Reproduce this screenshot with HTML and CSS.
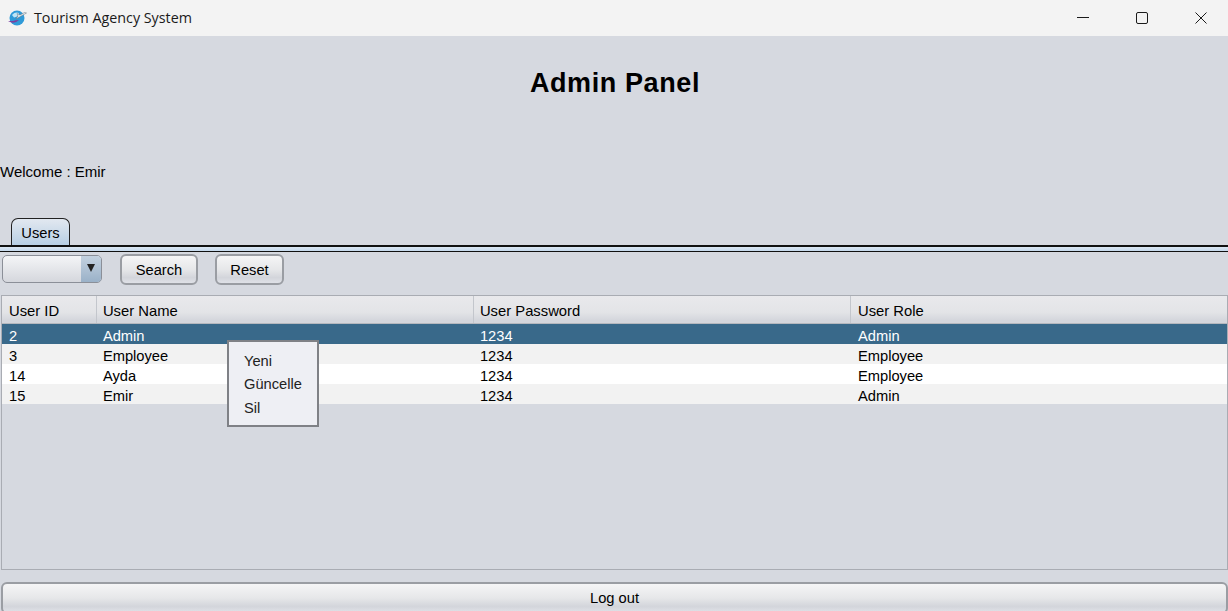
FILE: index.html
```html
<!DOCTYPE html>
<html lang="en">
<head>
    <meta charset="UTF-8">
    <meta name="viewport" content="width=device-width, initial-scale=1.0">
    <title>Tourism Agency System</title>
    <link rel="stylesheet" href="styles.css">
</head>
<body>
    <!-- Title Bar -->
    <div class="titlebar">
        <svg class="app-icon" width="20" height="18" viewBox="0 0 20 18">
            <circle cx="10" cy="9" r="7.5" fill="#2f9ad8"/>
            <path d="M5 6 Q8 2.5 12 4 Q11 8 7 8.5 Z" fill="#bfe6f7"/>
            <path d="M1 12 Q7 16 12 11 Q8 11 6 12 Z" fill="#7a3fa0"/>
            <path d="M9 10 L19.5 4 L17.5 3.5 L13 6 L10 4.5 L11 7 Z" fill="#e8eef2" stroke="#66707a" stroke-width="0.5"/>
        </svg>
        <span class="app-title">Tourism Agency System</span>
        <div class="window-controls">
            <svg class="win-btn" width="12" height="12" viewBox="0 0 12 12"><path d="M0 5.5 H12" stroke="#1a1a1a" fill="none"/></svg>
            <svg class="win-btn" width="12" height="12" viewBox="0 0 12 12"><rect x="0.5" y="0.5" width="11" height="11" rx="1.5" stroke="#1a1a1a" fill="none"/></svg>
            <svg class="win-btn" width="12" height="12" viewBox="0 0 12 12"><path d="M0.5 0.5 L11.5 11.5 M11.5 0.5 L0.5 11.5" stroke="#1a1a1a" fill="none"/></svg>
        </div>
    </div>

    <div class="window">
        <h1 class="panel-title">Admin Panel</h1>
        <div class="welcome">Welcome : Emir</div>

        <!-- Tabs -->
        <div class="tabs">
            <div class="tab">Users</div>
        </div>
        <div class="tab-rule"></div>

        <!-- Filter Row -->
        <div class="toolbar">
            <div class="combo"><span class="combo-arrow"></span></div>
            <button class="btn btn-search">Search</button>
            <button class="btn btn-reset">Reset</button>
        </div>

        <!-- Users Table -->
        <div class="table-box">
            <div class="row header">
                <div class="cell col-id">User ID</div>
                <div class="cell col-wide">User Name</div>
                <div class="cell col-wide">User Password</div>
                <div class="cell col-wide">User Role</div>
            </div>
            <div class="row selected">
                <div class="cell col-id">2</div>
                <div class="cell col-wide">Admin</div>
                <div class="cell col-wide">1234</div>
                <div class="cell col-wide">Admin</div>
            </div>
            <div class="row alt">
                <div class="cell col-id">3</div>
                <div class="cell col-wide">Employee</div>
                <div class="cell col-wide">1234</div>
                <div class="cell col-wide">Employee</div>
            </div>
            <div class="row">
                <div class="cell col-id">14</div>
                <div class="cell col-wide">Ayda</div>
                <div class="cell col-wide">1234</div>
                <div class="cell col-wide">Employee</div>
            </div>
            <div class="row alt">
                <div class="cell col-id">15</div>
                <div class="cell col-wide">Emir</div>
                <div class="cell col-wide">1234</div>
                <div class="cell col-wide">Admin</div>
            </div>

            <!-- Context Menu -->
            <ul class="context-menu">
                <li>Yeni</li>
                <li>Güncelle</li>
                <li>Sil</li>
            </ul>
        </div>

        <button class="btn logout">Log out</button>
    </div>
</body>
</html>
```

FILE: styles.css
```css
html, body {
    margin: 0;
    padding: 0;
    height: 611px;
    overflow: hidden;
}
body {
    font-family: "Liberation Sans", Arial, sans-serif;
    font-size: 14.7px;
    color: #000;
    background-color: #d6d9e0;
}
.titlebar {
    height: 36px;
    background-color: #f3f3f3;
    display: flex;
    align-items: center;
    padding-left: 7px;
    padding-bottom: 1px;
    box-sizing: border-box;
}
.app-icon {
    margin-right: 7px;
}
.app-title {
    font-family: "Open Sans", sans-serif;
    font-size: 14.3px;
    color: #1a1a1a;
}
.window-controls {
    margin-left: auto;
    display: flex;
    padding-right: 21px;
    gap: 47px;
}
.window {
    height: 575px;
    display: flex;
    flex-direction: column;
}
.window > * {
    flex-shrink: 0;
}
.panel-title {
    margin: 0;
    padding: 31px 0 0 2px;
    height: 32px;
    line-height: 33px;
    font-size: 27px;
    letter-spacing: 0.6px;
    text-align: center;
    color: #000;
}
.welcome {
    margin-top: 63px;
    height: 20px;
    line-height: 20px;
    font-size: 15px;
    color: #000;
}
.tabs {
    margin-top: 34px;
    padding-left: 11px;
    height: 29px;
    display: flex;
    align-items: flex-end;
}
.tab {
    width: 59px;
    height: 27px;
    line-height: 29px;
    text-align: center;
    box-sizing: border-box;
    border: 2px solid #222;
    border-width: 1px 1px 0;
    border-radius: 7px 7px 0 0;
    background: linear-gradient(#e2e8f0, #b8cfe4);
}
.tab-rule {
    height: 4px;
    border-top: 2px solid #111;
    border-bottom: 1px solid #111;
    background: linear-gradient(#dbe7f3, #c5d9ec);
}
.toolbar {
    display: flex;
    align-items: center;
    padding: 3px 0 0 2px;
    height: 31px;
}
.combo {
    width: 100px;
    height: 28px;
    margin-bottom: 3px;
    box-sizing: border-box;
    border: 1px solid #8b8f98;
    border-radius: 5px;
    background: linear-gradient(#f4f5f7, #d5d7dd);
    display: flex;
    justify-content: flex-end;
}
.combo-arrow {
    width: 20px;
    background: linear-gradient(#c4d2e0, #9ab1c8);
    border-radius: 0 4px 4px 0;
    position: relative;
}
.combo-arrow::after {
    content: "";
    position: absolute;
    left: 6px;
    top: 8px;
    border-left: 4px solid transparent;
    border-right: 4px solid transparent;
    border-top: 8px solid #222;
}
.btn {
    font-family: "Liberation Sans", Arial, sans-serif;
    font-size: 14.7px;
    color: #000;
    padding: 0;
    box-sizing: border-box;
    border: 2px solid #9a9da3;
    border-radius: 6px;
    background: linear-gradient(#f5f5f6 0%, #e6e7e9 50%, #d3d5db 80%, #dfe1e7 100%);
}
.toolbar .btn {
    height: 31px;
    margin-bottom: 2px;
}
.btn-search {
    width: 78px;
    margin-left: 18px;
}
.btn-reset {
    width: 69px;
    margin-left: 17px;
}
.table-box {
    position: relative;
    margin: 9px 0 0 1px;
    height: 275px;
    box-sizing: border-box;
    border: 1px solid #a9acb3;
}
.row {
    display: flex;
    height: 20px;
    line-height: 24px;
    background-color: #fff;
}
.row.alt {
    background-color: #f2f2f2;
}
.row.selected {
    background-color: #39698a;
    color: #fff;
}
.row.header {
    height: 27px;
    line-height: 30px;
    font-size: 14.8px;
    background: linear-gradient(#e9e9ec 0%, #e3e4e7 60%, #d4d6dc 90%);
    border-bottom: 1px solid #b5b8be;
}
.cell {
    box-sizing: border-box;
    padding-left: 7px;
    white-space: nowrap;
}
.col-id {
    width: 94px;
}
.col-wide {
    width: 377.5px;
}
.row .col-wide:last-child {
    padding-left: 8px;
}
.header .cell + .cell {
    border-left: 1px solid #c3c6cc;
    padding-left: 6px;
}
.header .col-wide:last-child {
    padding-left: 7px;
}
.context-menu {
    position: absolute;
    left: 225px;
    top: 44px;
    width: 92px;
    height: 87px;
    box-sizing: border-box;
    margin: 0;
    padding: 8px 0 0 15px;
    list-style-type: none;
    background-color: #eeeff4;
    border: 2px solid #7f8186;
    color: #222;
}
.context-menu li {
    height: 23.4px;
    line-height: 23px;
}
.logout {
    margin: 12px 0 0 1px;
    width: 1227px;
    height: 32px;
}
```
